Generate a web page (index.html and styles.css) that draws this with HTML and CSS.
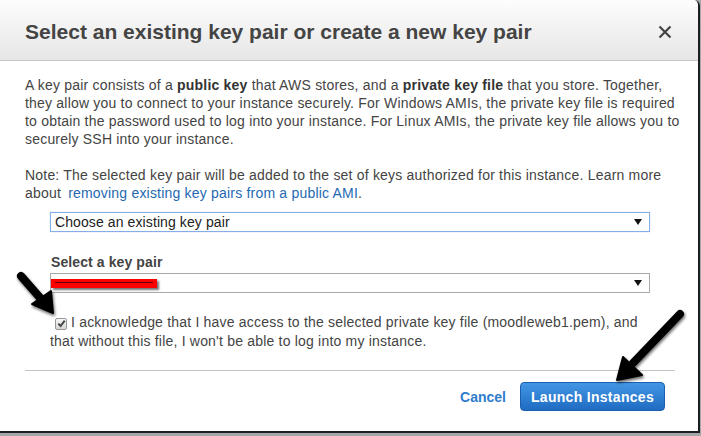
FILE: index.html
```html
<!DOCTYPE html>
<html>
<head>
<meta charset="utf-8">
<link rel="stylesheet" href="styles.css">
</head>
<body>
<div class="frame">
  <div class="dialog">
    <header class="head">
      <h1 class="title">Select an existing key pair or create a new key pair</h1>
      <svg class="close" width="14" height="14" viewBox="0 0 14 14"><path d="M1.5 1.5 L12.5 12.5 M12.5 1.5 L1.5 12.5" stroke="#444" stroke-width="2.2" fill="none"/></svg>
    </header>
    <div class="body">
      <p class="para">A key pair consists of a <b>public key</b> that AWS stores, and a <b>private key file</b> that you store. Together,<br>they allow you to connect to your instance securely. For Windows AMIs, the private key file is required<br>to obtain the password used to log into your instance. For Linux AMIs, the private key file allows you to<br>securely SSH into your instance.</p>
      <p class="para">Note: The selected key pair will be added to the set of keys authorized for this instance. Learn more<br>about <a class="link" href="#">removing existing key pairs from a public AMI</a>.</p>
      <div class="form">
        <div class="select focus"><span class="val">Choose an existing key pair</span><span class="caret"></span></div>
        <div class="lbl">Select a key pair</div>
        <div class="select"><span class="redact"><span class="strike"></span></span><span class="caret"></span></div>
        <div class="ack"><span class="cb"><svg width="9" height="9" viewBox="0 0 9 9"><path d="M1.3 4.6 L3.6 7 L7.7 1.6" stroke="#444" stroke-width="1.9" fill="none"/></svg></span>I acknowledge that I have access to the selected private key file (moodleweb1.pem), and<br>that without this file, I won't be able to log into my instance.</div>
      </div>
      <div class="sep"></div>
    </div>
    <footer class="foot">
      <a class="cancel" href="#">Cancel</a>
      <button class="launch">Launch Instances</button>
    </footer>
  </div>
</div>
<svg class="arrows" width="701" height="436" viewBox="0 0 701 436">
  <defs>
    <filter id="sh" x="-50%" y="-50%" width="200%" height="200%">
      <feGaussianBlur in="SourceAlpha" stdDeviation="1.6"/>
      <feOffset dx="1" dy="1.5" result="b"/>
      <feComponentTransfer><feFuncA type="linear" slope="0.6"/></feComponentTransfer>
      <feMerge><feMergeNode/><feMergeNode in="SourceGraphic"/></feMerge>
    </filter>
  </defs>
  <g filter="url(#sh)" fill="#000" stroke="#000" stroke-linejoin="round" stroke-linecap="round">
    <line x1="21" y1="276" x2="42" y2="300" stroke-width="8"/>
    <polygon points="32,304 51,291 53,313" stroke-width="2"/>
    <line x1="680" y1="314" x2="633" y2="363" stroke-width="8"/>
    <polygon points="623,357 642,375 617,380" stroke-width="2"/>
  </g>
</svg>
</body>
</html>
```
FILE: styles.css
```css
html, body {
  margin: 0;
  padding: 0;
}
body {
  width: 701px;
  height: 436px;
  background: #a4a7aa;
  font-family: "Liberation Sans", Arial, sans-serif;
  position: relative;
  overflow: hidden;
}
.frame {
  width: 698px;
  height: 431px;
  background: #fff;
  border-right: 2px solid #1e1e1e;
  border-bottom: 2px solid #1e1e1e;
  border-top-right-radius: 6px;
  overflow: hidden;
}
.dialog {
  display: flex;
  flex-direction: column;
  height: 100%;
}
.head {
  height: 60px;
  border-bottom: 1px solid #c8c8c8;
  background: linear-gradient(#fdfdfd, #e6e6e6);
  display: flex;
  align-items: center;
  justify-content: space-between;
  padding: 0 26px 0 25px;
}
.title {
  margin: 0;
  font-size: 21px;
  font-weight: bold;
  color: #444;
  position: relative;
  top: 2px;
}
.close {
  display: block;
  position: relative;
  top: 2px;
}
.body {
  padding: 15px 23px 0 25px;
  font-size: 14px;
  line-height: 18px;
  color: #444;
  letter-spacing: 0.2px;
}
.para {
  margin: 0 0 18px;
  white-space: nowrap;
}
.para b {
  color: #333;
}
.link {
  color: #2569b2;
  text-decoration: none;
  margin-left: 3px;
}
.form {
  width: 600px;
  margin: -8px 0 0 25px;
}
.select {
  height: 18px;
  border: 1px solid #a9a9a9;
  display: flex;
  align-items: center;
  justify-content: space-between;
  padding: 0 7px 0 4px;
  position: relative;
  letter-spacing: 0.1px;
}
.select.focus {
  border-color: #86aee6;
  box-shadow: 0 0 1px #aac6ee;
}
.val {
  color: #222;
}
.caret {
  width: 0;
  height: 0;
  border-left: 4px solid transparent;
  border-right: 4px solid transparent;
  border-top: 6px solid #111;
  margin-left: auto;
}
.lbl {
  margin-top: 21px;
  margin-left: 1px;
  font-weight: bold;
  color: #444;
  letter-spacing: 0.1px;
}
.lbl + .select {
  margin-top: 2px;
}
.redact {
  position: absolute;
  left: 0;
  top: 5px;
  width: 106px;
  height: 9px;
  background: #f00;
  box-shadow: 2px 2px 2px rgba(0,0,0,0.55);
}
.strike {
  position: absolute;
  left: 4px;
  right: 4px;
  top: 3px;
  height: 1px;
  background: #600;
}
.ack {
  margin-top: 20px;
  line-height: 19px;
  color: #444;
  white-space: nowrap;
}
.cb {
  display: inline-flex;
  align-items: center;
  justify-content: center;
  width: 10px;
  height: 10px;
  border: 1px solid #999;
  border-radius: 2px;
  background: linear-gradient(#f6f6f6, #d6d6d6);
  margin: 0 4px 0 5px;
  vertical-align: -1px;
}
.cb svg {
  display: block;
}
.sep {
  height: 1px;
  background: #c4c4c4;
  margin-top: 19px;
  width: 650px;
}
.foot {
  display: flex;
  justify-content: flex-end;
  align-items: center;
  gap: 14px;
  padding: 11px 33px 0 0;
}
.cancel {
  color: #2f7ccc;
  font-weight: bold;
  font-size: 14px;
  text-decoration: none;
}
.launch {
  height: 29px;
  width: 145px;
  border: 1px solid #1b5fae;
  border-radius: 4px;
  background: linear-gradient(#4396e4, #1f6cc2);
  color: #fff;
  font-family: "Liberation Sans", Arial, sans-serif;
  font-weight: bold;
  font-size: 14px;
  letter-spacing: 0.3px;
  padding: 0;
}
.arrows {
  position: absolute;
  left: 0;
  top: 0;
  pointer-events: none;
}
```
